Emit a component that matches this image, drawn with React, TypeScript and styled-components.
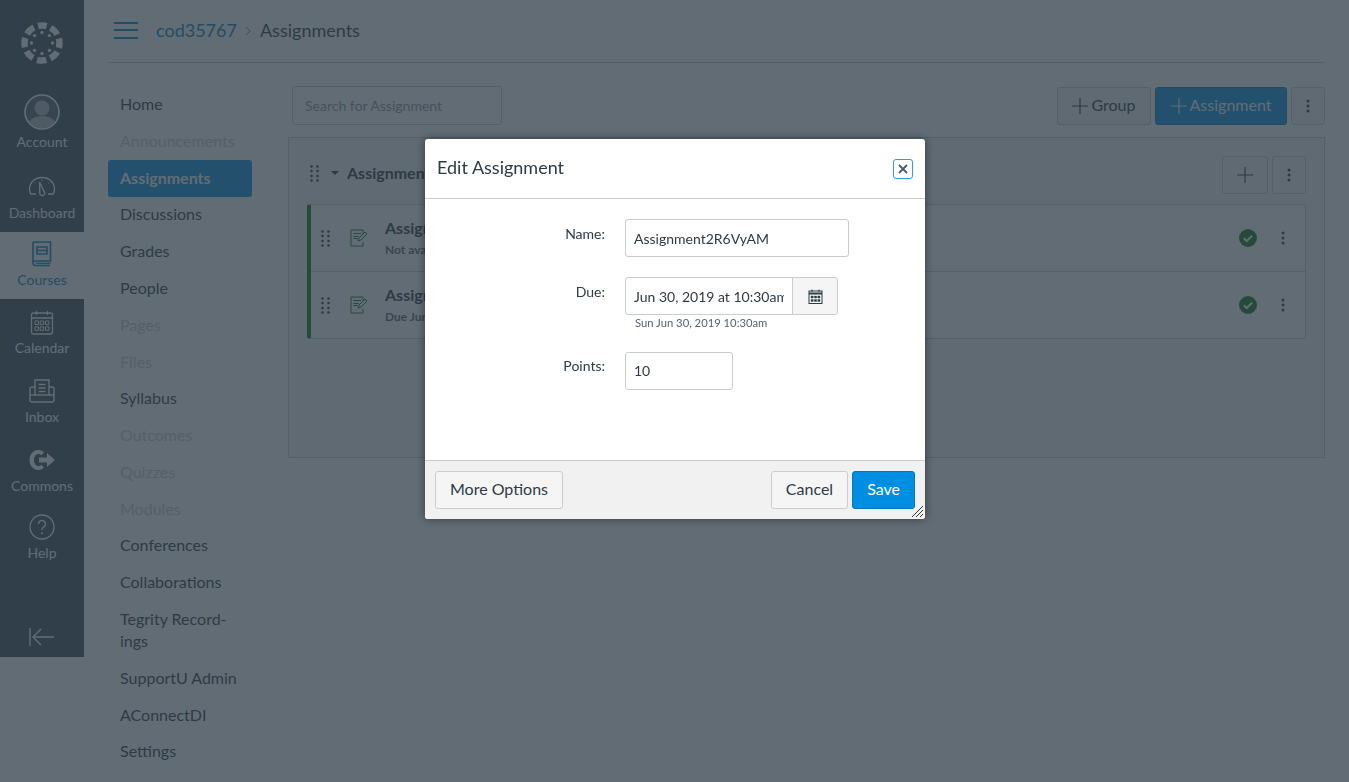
import styled, { createGlobalStyle } from "styled-components";

const GlobalStyle = createGlobalStyle`
  html, body {
    margin: 0;
    height: 100%;
    background: #fff;
    overflow: hidden;
  }
  * { box-sizing: border-box; }
  body {
    font-family: Lato, "Open Sans", sans-serif;
    color: #2d3b45;
  }
`;

const Page = styled.div`
  display: flex;
  align-items: flex-start;
  height: 782px;
  overflow: hidden;
`;

const Sidebar = styled.nav`
  width: 84px;
  height: 657px;
  flex: none;
  background: #394b58;
  display: flex;
  flex-direction: column;
`;

const LogoWrap = styled.div`
  height: 85px;
  display: flex;
  align-items: center;
  justify-content: center;
  padding-top: 1px;
`;

const SideItem = styled.a<{ $h: number; $top: number; $active?: boolean }>`
  height: ${(p) => p.$h}px;
  padding-top: ${(p) => p.$top}px;
  display: flex;
  flex-direction: column;
  align-items: center;
  gap: 2px;
  font-size: 14px;
  line-height: 20px;
  color: ${(p) => (p.$active ? "#0081bd" : "#fff")};
  background: ${(p) => (p.$active ? "#fff" : "transparent")};
`;

const SideIcon = styled.span`
  height: 28px;
  display: flex;
  align-items: center;
  justify-content: center;
`;

const Collapse = styled.div`
  margin-top: auto;
  padding-bottom: 11px;
  display: flex;
  justify-content: center;
`;

const Main = styled.div`
  flex: 1;
  padding: 0 24px;
  min-width: 0;
`;

const Header = styled.header`
  height: 63px;
  border-bottom: 1px solid #c7cdd1;
  display: flex;
  align-items: center;
  padding: 0 0 2px 6px;
`;

const Burger = styled.span`
  width: 24px;
  height: 17px;
  border-top: 2px solid #0081bd;
  border-bottom: 2px solid #0081bd;
  position: relative;
  margin-right: 18px;
  &::after {
    content: "";
    position: absolute;
    left: 0;
    right: 0;
    top: 5.5px;
    height: 2px;
    background: #0081bd;
  }
`;

const Crumb = styled.span<{ $link?: boolean }>`
  font-size: 18px;
  color: ${(p) => (p.$link ? "#0081bd" : "#2d3b45")};
`;

const CrumbSep = styled.span`
  margin: 2px 9px 0 8px;
  display: flex;
`;

const Body = styled.div`
  display: flex;
`;

const LeftNav = styled.ul`
  width: 144px;
  flex: none;
  list-style: none;
  margin: 23.7px 0 0;
  padding: 0;
`;

const LeftItem = styled.li<{ $active?: boolean; $off?: boolean }>`
  padding: 6.4px 12px 8.4px;
  font-size: 16px;
  line-height: 22px;
  border-radius: 3px;
  font-weight: ${(p) => (p.$active ? 700 : 400)};
  color: ${(p) => (p.$active ? "#fff" : p.$off ? "#c7cdd1" : "#2d3b45")};
  background: ${(p) => (p.$active ? "#008ee2" : "transparent")};
`;

const Content = styled.section`
  flex: 1;
  margin-left: 36px;
  min-width: 0;
`;

const Toolbar = styled.div`
  display: flex;
  align-items: flex-end;
  gap: 4px;
  margin-top: 23px;
  padding-left: 4px;
`;

const Search = styled.input`
  width: 210px;
  height: 39px;
  margin-right: auto;
  border: 1px solid #c7cdd1;
  border-radius: 3px;
  padding: 0 12px;
  font: 14px Lato, sans-serif;
  background: #fff;
  &::placeholder {
    color: #8b969e;
    opacity: 1;
  }
`;

const Btn = styled.button<{ $primary?: boolean; $w?: number }>`
  height: 38px;
  width: ${(p) => (p.$w ? `${p.$w}px` : "auto")};
  padding: 0;
  display: flex;
  align-items: center;
  justify-content: center;
  gap: 3px;
  border: 1px solid ${(p) => (p.$primary ? "#0077c0" : "#c7cdd1")};
  border-radius: 3px;
  background: ${(p) => (p.$primary ? "#008ee2" : "#f5f5f5")};
  color: ${(p) => (p.$primary ? "#fff" : "#2d3b45")};
  font: 16px Lato, sans-serif;
`;

const ToolBtn = styled(Btn)`
  padding-bottom: 4px;
  svg {
    margin-top: 4px;
  }
`;

const GroupBox = styled.div`
  margin-top: 12px;
  height: 321px;
  background: #f5f5f5;
  border: 1px solid #c7cdd1;
  padding: 18px 18px 0;
`;

const GroupHead = styled.div`
  height: 38px;
  display: flex;
  align-items: center;
  gap: 4px;
`;

const Grip = styled.span`
  display: flex;
  margin: 0 8px 4px 3px;
`;

const Caret = styled.span`
  width: 0;
  height: 0;
  border-left: 4px solid transparent;
  border-right: 4px solid transparent;
  border-top: 4px solid #2d3b45;
  margin: 0 4px 5px 0;
`;

const GroupTitle = styled.span`
  font-size: 16px;
  font-weight: 700;
  margin: 0 auto 5px 0;
`;

const Rows = styled.div`
  margin-top: 10px;
  background: #fff;
  border: 1px solid #c7cdd1;
  border-left: 4px solid #127a1b;
  border-radius: 3px;
`;

const Row = styled.div`
  height: 66px;
  display: flex;
  align-items: center;
  padding-left: 10px;
  & + & {
    height: 67px;
    border-top: 1px solid #c7cdd1;
  }
`;

const RowIcon = styled.span`
  display: flex;
  margin: 0 17px 0 20px;
`;

const RowText = styled.div`
  flex: 1;
`;

const RowTitle = styled.div`
  font-size: 16px;
  font-weight: 700;
  line-height: 20px;
  margin-bottom: 4px;
`;

const RowSub = styled.div`
  font-size: 12px;
  font-weight: 700;
  color: #556572;
  line-height: 16px;
`;

const RowActions = styled.div`
  display: flex;
  align-items: center;
  gap: 24px;
  padding-right: 20px;
`;

const Overlay = styled.div`
  position: fixed;
  inset: 0;
  background: rgba(45, 59, 69, 0.75);
`;

const Modal = styled.div`
  position: fixed;
  left: 425px;
  top: 139px;
  width: 500px;
  height: 380px;
  display: flex;
  flex-direction: column;
  background: #fff;
  border-radius: 3px;
  overflow: hidden;
  box-shadow: 0 0 10px rgba(0, 0, 0, 0.45);
`;

const ModalHead = styled.div`
  height: 60px;
  flex: none;
  border-bottom: 1px solid #c7cdd1;
  display: flex;
  align-items: center;
  justify-content: space-between;
  padding: 0 12px 4px;
`;

const ModalTitle = styled.h1`
  margin: 0;
  font-size: 18px;
  font-weight: 400;
`;

const CloseBtn = styled.button`
  width: 20px;
  height: 20px;
  padding: 0;
  display: flex;
  align-items: center;
  justify-content: center;
  background: #fff;
  border: 1px solid #2b9ce6;
  border-radius: 3px;
  margin-top: 4px;
`;

const ModalBody = styled.div`
  flex: 1;
  padding-top: 20px;
  display: flex;
  flex-direction: column;
`;

const Field = styled.div<{ $gap: number }>`
  display: flex;
  margin-bottom: ${(p) => p.$gap}px;
`;

const Label = styled.label`
  width: 180px;
  flex: none;
  margin-right: 20px;
  text-align: right;
  font-size: 14px;
  line-height: 20px;
  padding-top: 5px;
`;

const PointsLabel = styled(Label)`
  padding-top: 4px;
`;

const Input = styled.input<{ $w: number }>`
  width: ${(p) => p.$w}px;
  height: 38px;
  border: 1px solid #c7cdd1;
  border-radius: 3px;
  padding: 0 8px;
  font: 14px Lato, sans-serif;
  color: #2d3b45;
  background: #fff;
`;

const PointsInput = styled(Input)`
  padding-bottom: 2px;
`;

const DateGroup = styled.div`
  display: flex;
  height: 38px;
  width: 213px;
`;

const DateInput = styled(Input)`
  border-radius: 3px 0 0 3px;
`;

const DateBtn = styled.button`
  width: 46px;
  margin-left: -1px;
  padding: 0;
  display: flex;
  align-items: center;
  justify-content: center;
  border: 1px solid #c7cdd1;
  border-radius: 0 3px 3px 0;
  background: #f5f5f5;
`;

const DateHint = styled.div`
  font-size: 11.25px;
  line-height: 16px;
  color: #556572;
  margin: 0 0 0 10px;
`;

const ModalFoot = styled.div`
  height: 59px;
  flex: none;
  position: relative;
  background: #f1f1f1;
  border-top: 1px solid #c7cdd1;
  display: flex;
  align-items: center;
  gap: 4px;
  padding: 0 10px 1px;
`;

const FootBtn = styled(Btn)`
  padding: 0 14px 2px;
`;

const Spacer = styled.div`
  margin-left: auto;
`;

const Resizer = styled.svg`
  position: absolute;
  right: 1px;
  bottom: 1px;
`;

const Logo = () => (
  <svg width="44" height="44" viewBox="0 0 44 44">
    <circle
      cx="22"
      cy="22"
      r="17.5"
      fill="none"
      stroke="#fff"
      strokeWidth="6.5"
      strokeDasharray="9.5 4.24"
      strokeDashoffset="4.75"
      transform="rotate(-90 22 22)"
    />
    {[0, 45, 90, 135, 180, 225, 270, 315].map((a) => (
      <circle
        key={a}
        cx={22 + 10.5 * Math.cos((a * Math.PI) / 180)}
        cy={22 + 10.5 * Math.sin((a * Math.PI) / 180)}
        r="1.7"
        fill="#fff"
      />
    ))}
  </svg>
);

const Avatar = () => (
  <svg width="36" height="36" viewBox="0 0 36 36">
    <circle cx="18" cy="18" r="17" fill="#fff" fillOpacity=".15" stroke="#fff" strokeWidth="1.6" />
    <circle cx="18" cy="14" r="7.5" fill="#fff" fillOpacity=".55" />
    <path d="M5 28c3-5 8-5 10-6h6c2 1 7 1 10 6a17 17 0 0 1-26 0z" fill="#fff" fillOpacity=".55" />
  </svg>
);

const Gauge = () => (
  <svg width="28" height="22" viewBox="0 0 28 22" fill="none" stroke="#fff" strokeWidth="1.4">
    <path d="M8 18H2.800C1.800 16 1.500 14.500 1.500 13 1.500 6.500 7 1.500 14 1.500S26.500 6.500 26.500 13c0 1.500-.3 3-1.300 5H20" />
    <path d="M11.500 6l4.600 9.500a2.500 2.500 0 1 1-4.300 2.300z" />
    <path d="M14 3.500v1.500M6.500 6.500l1 1M21.500 6.500l-1 1" strokeWidth="1" />
  </svg>
);

const Book = () => (
  <svg width="22" height="26" viewBox="0 0 22 26" fill="none" stroke="#0081bd" strokeWidth="1.6">
    <path d="M2 21V2.200C2 1.500 2.500 1 3.200 1H19.500v19H4a2 2 0 0 0-2 2.200A2.500 2.500 0 0 0 4.500 24.500H19" />
    <path d="M6 6h10v7H6zM6 9.500h10" />
    <path d="M5 22.300h14.500" strokeWidth="1.200" />
  </svg>
);

const CalendarIcon = () => (
  <svg width="24" height="25" viewBox="0 0 24 25" fill="none" stroke="#fff" strokeWidth="1.300">
    <rect x="1.500" y="3" width="21" height="21" rx="2" />
    <path d="M1.500 8h21M6.500 1v4M17.500 1v4" />
    <path d="M5 11h3.500v3.500H5zM10.200 11h3.500v3.500h-3.500zM15.500 11H19v3.500h-3.500zM5 16.800h3.500v3.500H5zM10.200 16.800h3.500v3.500h-3.500zM15.500 16.800H19v3.500h-3.500z" strokeWidth="1" />
  </svg>
);

const Inbox = () => (
  <svg width="26" height="24" viewBox="0 0 26 24" fill="none" stroke="#fff" strokeWidth="1.400">
    <path d="M6 16V1h14v15" />
    <path d="M9.500 5.500h7M9.500 9h7M9.500 12.500h7" />
    <path d="M6 8H3a2 2 0 0 0-2 2v11a2 2 0 0 0 2 2h20a2 2 0 0 0 2-2V10a2 2 0 0 0-2-2h-3" />
    <path d="M1 16h24" />
  </svg>
);

const Commons = () => (
  <svg width="26" height="20" viewBox="0 0 26 20">
    <path
      d="M9.500 0C11.800 0 13.800 1 15 2.800L12 5.300C11.300 4.300 10.500 4 9.500 4 7.300 4 5 6 5 10s2.300 6 4.500 6c1 0 1.800-.3 2.500-1.300l3 2.500C13.800 19 11.800 20 9.500 20 4 20 .5 15.500.5 10S4 0 9.500 0zM18 3l8 7-8 7v-4.500H10v-5h8z"
      fill="#fff"
    />
  </svg>
);

const HelpIcon = () => (
  <svg width="26" height="26" viewBox="0 0 26 26" fill="none" stroke="#fff" strokeWidth="1.300">
    <circle cx="13" cy="13" r="12" />
    <path d="M9.500 10a3.500 3.500 0 1 1 5.300 3c-1.200.8-1.800 1.400-1.800 3" strokeWidth="1.500" />
    <circle cx="13" cy="19.300" r="1" fill="#fff" stroke="none" />
  </svg>
);

const CollapseIcon = () => (
  <svg width="26" height="18" viewBox="0 0 26 18" fill="none" stroke="#fff" strokeWidth="1.400">
    <path d="M1 0v18M25 9H4M12 1L4 9l8 8" />
  </svg>
);

const Plus = ({ size = 16, color = "#2d3b45" }: { size?: number; color?: string }) => (
  <svg width={size} height={size} viewBox="0 0 16 16" stroke={color} strokeWidth="1.200">
    <path d="M8 0v16M0 8h16" />
  </svg>
);

const Kebab = () => (
  <svg width="4" height="14" viewBox="0 0 4 14" fill="#2d3b45">
    <circle cx="2" cy="2" r="1.500" />
    <circle cx="2" cy="7" r="1.500" />
    <circle cx="2" cy="12" r="1.500" />
  </svg>
);

const GripDots = () => (
  <svg width="9" height="17" viewBox="0 0 9 17" fill="#2d3b45">
    {[1.5, 6, 11, 15.5].map((y) => (
      <g key={y}>
        <circle cx="1.500" cy={y} r="1.300" />
        <circle cx="7.500" cy={y} r="1.300" />
      </g>
    ))}
  </svg>
);

const AssignmentIcon = () => (
  <svg width="18" height="18" viewBox="0 0 18 18" fill="none" stroke="#127a1b" strokeWidth="1">
    <path d="M13 5V1H1v16h12v-4" />
    <path d="M3.500 4.500h7.500M3.500 7.500h5M3.500 9.500h4" />
    <path d="M8 12l1-3 6-6 2 2-6 6z" />
  </svg>
);

const Check = () => (
  <svg width="18" height="18" viewBox="0 0 18 18">
    <circle cx="9" cy="9" r="9" fill="#127a1b" />
    <path d="M4.800 9.200l2.900 2.800 5.500-5.400" fill="none" stroke="#fff" strokeWidth="2" />
  </svg>
);

const Chevron = () => (
  <svg width="6" height="10" viewBox="0 0 6 10" fill="none" stroke="#73818c" strokeWidth="1">
    <path d="M1 1l4 4-4 4" />
  </svg>
);

const CalendarSmall = () => (
  <svg width="15" height="15" viewBox="0 0 15 15" fill="none" stroke="#2d3b45" strokeWidth="1">
    <rect x="1" y="2" width="13" height="12.500" />
    <path d="M1 4.500h13" strokeWidth="2" />
    <path d="M4 .5v2.500M11 .5v2.500" />
    <path d="M3 7h2.200v2H3zM6.400 7h2.200v2H6.400zM9.800 7H12v2H9.800zM3 10.500h2.200v2H3zM6.400 10.500h2.200v2H6.400zM9.800 10.500H12v2H9.800z" fill="#2d3b45" strokeWidth=".4" />
  </svg>
);

const courseNav = [
  { label: "Home" },
  { label: "Announcements", off: true },
  { label: "Assignments", active: true },
  { label: "Discussions" },
  { label: "Grades" },
  { label: "People" },
  { label: "Pages", off: true },
  { label: "Files", off: true },
  { label: "Syllabus" },
  { label: "Outcomes", off: true },
  { label: "Quizzes", off: true },
  { label: "Modules", off: true },
  { label: "Conferences" },
  { label: "Collaborations" },
  { label: "Tegrity Record-ings" },
  { label: "SupportU Admin" },
  { label: "AConnectDI" },
  { label: "Settings" },
];

function App() {
  return (
    <>
      <GlobalStyle />
      <Page>
        <Sidebar>
          <LogoWrap>
            <Logo />
          </LogoWrap>
          <SideItem $h={80} $top={9}>
            <Avatar />
            Account
          </SideItem>
          <SideItem $h={67} $top={8}>
            <SideIcon>
              <Gauge />
            </SideIcon>
            Dashboard
          </SideItem>
          <SideItem $h={67} $top={8} $active>
            <SideIcon>
              <Book />
            </SideIcon>
            Courses
          </SideItem>
          <SideItem $h={68} $top={9}>
            <SideIcon>
              <CalendarIcon />
            </SideIcon>
            Calendar
          </SideItem>
          <SideItem $h={69} $top={10}>
            <SideIcon>
              <Inbox />
            </SideIcon>
            Inbox
          </SideItem>
          <SideItem $h={69} $top={10}>
            <SideIcon>
              <Commons />
            </SideIcon>
            Commons
          </SideItem>
          <SideItem $h={67} $top={8}>
            <SideIcon>
              <HelpIcon />
            </SideIcon>
            Help
          </SideItem>
          <Collapse>
            <CollapseIcon />
          </Collapse>
        </Sidebar>
        <Main>
          <Header>
            <Burger />
            <Crumb $link>cod35767</Crumb>
            <CrumbSep>
              <Chevron />
            </CrumbSep>
            <Crumb>Assignments</Crumb>
          </Header>
          <Body>
            <LeftNav>
              {courseNav.map((item) => (
                <LeftItem key={item.label} $active={item.active} $off={item.off}>
                  {item.label}
                </LeftItem>
              ))}
            </LeftNav>
            <Content>
              <Toolbar>
                <Search placeholder="Search for Assignment" />
                <ToolBtn $w={94}>
                  <Plus />
                  Group
                </ToolBtn>
                <ToolBtn $w={132} $primary>
                  <Plus color="#fff" />
                  Assignment
                </ToolBtn>
                <Btn $w={34}>
                  <Kebab />
                </Btn>
              </Toolbar>
              <GroupBox>
                <GroupHead>
                  <Grip>
                    <GripDots />
                  </Grip>
                  <Caret />
                  <GroupTitle>Assignments</GroupTitle>
                  <Btn $w={46}>
                    <Plus />
                  </Btn>
                  <Btn $w={34}>
                    <Kebab />
                  </Btn>
                </GroupHead>
                <Rows>
                  <Row>
                    <GripDots />
                    <RowIcon>
                      <AssignmentIcon />
                    </RowIcon>
                    <RowText>
                      <RowTitle>Assignment1</RowTitle>
                      <RowSub>Not available until Jul 1</RowSub>
                    </RowText>
                    <RowActions>
                      <Check />
                      <Kebab />
                    </RowActions>
                  </Row>
                  <Row>
                    <GripDots />
                    <RowIcon>
                      <AssignmentIcon />
                    </RowIcon>
                    <RowText>
                      <RowTitle>Assignment2R6VyAM</RowTitle>
                      <RowSub>Due Jun 30 at 10:30am</RowSub>
                    </RowText>
                    <RowActions>
                      <Check />
                      <Kebab />
                    </RowActions>
                  </Row>
                </Rows>
              </GroupBox>
            </Content>
          </Body>
        </Main>
      </Page>
      <Overlay />
      <Modal>
        <ModalHead>
          <ModalTitle>Edit Assignment</ModalTitle>
          <CloseBtn aria-label="Close">
            <svg width="10" height="10" viewBox="0 0 10 10" stroke="#4a5a66" strokeWidth="1.800">
              <path d="M1 1l8 8M9 1l-8 8" />
            </svg>
          </CloseBtn>
        </ModalHead>
        <ModalBody>
          <Field $gap={20}>
            <Label>Name:</Label>
            <Input $w={224} value="Assignment2R6VyAM" readOnly />
          </Field>
          <Field $gap={21}>
            <Label>Due:</Label>
            <div>
              <DateGroup>
                <DateInput $w={168} value="Jun 30, 2019 at 10:30am" readOnly />
                <DateBtn aria-label="Pick date">
                  <CalendarSmall />
                </DateBtn>
              </DateGroup>
              <DateHint>Sun Jun 30, 2019 10:30am</DateHint>
            </div>
          </Field>
          <Field $gap={0}>
            <PointsLabel>Points:</PointsLabel>
            <PointsInput $w={108} value="10" readOnly />
          </Field>
        </ModalBody>
        <ModalFoot>
          <FootBtn>More Options</FootBtn>
          <Spacer />
          <FootBtn>Cancel</FootBtn>
          <FootBtn $primary>Save</FootBtn>
          <Resizer width="13" height="13" viewBox="0 0 13 13" stroke="#333" strokeWidth="1">
            <path d="M1 12L12 1M5 12l7-7M9 12l3-3" />
          </Resizer>
        </ModalFoot>
      </Modal>
    </>
  );
}

export default App;
